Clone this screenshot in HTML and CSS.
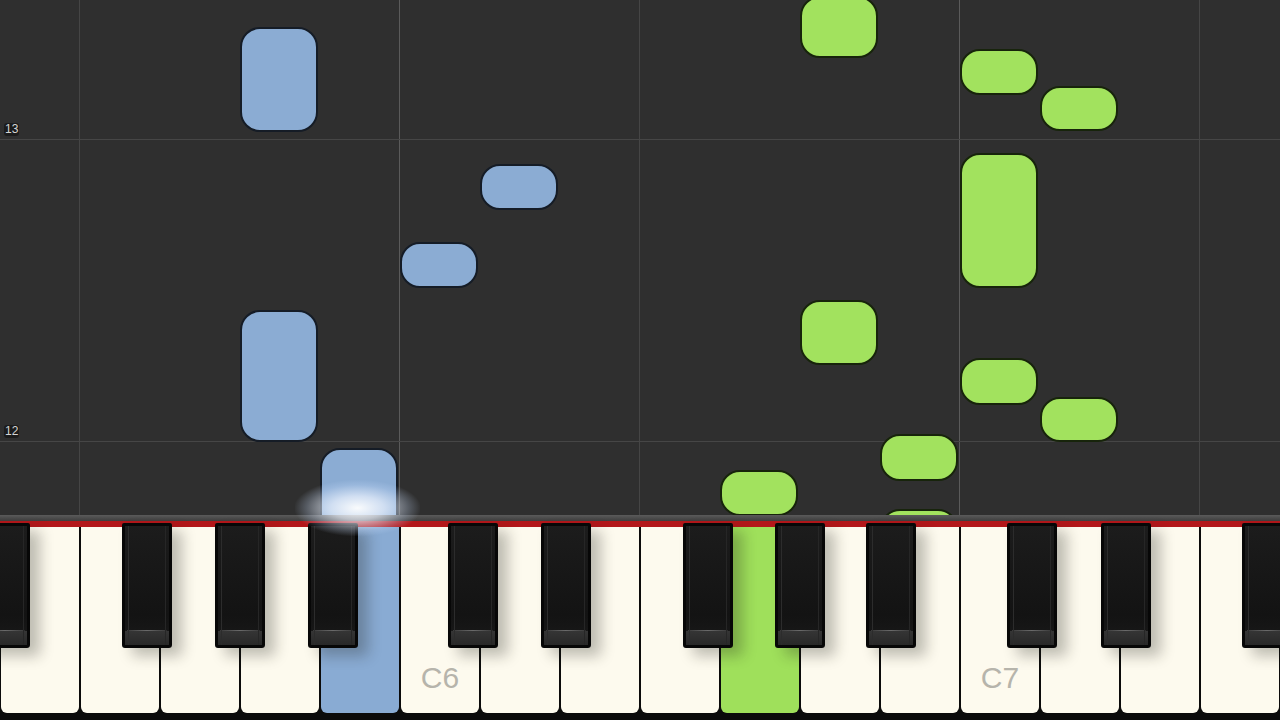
FILE: index.html
```html
<!DOCTYPE html>
<html lang="en">
<head>
    <meta charset="UTF-8">
    <meta name="viewport" content="width=device-width, initial-scale=1.0">
    <title>Piano Roll</title>
    <link rel="stylesheet" href="styles.css">
</head>
<body>
    <div class="stage">
        <div class="roll">
            <!-- grid -->
            <div class="vline" style="left: 79px"></div>
            <div class="vline vline-c" style="left: 399px"></div>
            <div class="vline" style="left: 639px"></div>
            <div class="vline vline-c" style="left: 959px"></div>
            <div class="vline" style="left: 1199px"></div>
            <div class="hline" style="top: 139px"></div>
            <div class="hline" style="top: 441px"></div>
            <span class="measure" style="top: 123px">13</span>
            <span class="measure" style="top: 425px">12</span>

            <!-- left hand -->
            <div class="note blue" style="left: 240px; top: 27px; height: 105px"></div>
            <div class="note blue" style="left: 480px; top: 164px; height: 46px"></div>
            <div class="note blue" style="left: 400px; top: 242px; height: 46px"></div>
            <div class="note blue" style="left: 240px; top: 310px; height: 132px"></div>
            <div class="note blue" style="left: 320px; top: 448px; height: 90px"></div>

            <!-- right hand -->
            <div class="note green" style="left: 800px; top: -4px; height: 62px"></div>
            <div class="note green" style="left: 960px; top: 49px; height: 46px"></div>
            <div class="note green" style="left: 1040px; top: 86px; height: 45px"></div>
            <div class="note green" style="left: 960px; top: 153px; height: 135px"></div>
            <div class="note green" style="left: 800px; top: 300px; height: 65px"></div>
            <div class="note green" style="left: 960px; top: 358px; height: 47px"></div>
            <div class="note green" style="left: 1040px; top: 397px; height: 45px"></div>
            <div class="note green" style="left: 880px; top: 434px; height: 47px"></div>
            <div class="note green" style="left: 720px; top: 470px; height: 46px"></div>
            <div class="note green" style="left: 880px; top: 509px; height: 46px"></div>
        </div>

        <div class="rail"></div>

        <div class="keyboard">
            <div class="whites">
                <div class="white"></div>
                <div class="white"></div>
                <div class="white"></div>
                <div class="white"></div>
                <div class="white pressed-blue"></div>
                <div class="white"><span class="label">C6</span></div>
                <div class="white"></div>
                <div class="white"></div>
                <div class="white"></div>
                <div class="white pressed-green"></div>
                <div class="white"></div>
                <div class="white"></div>
                <div class="white"><span class="label">C7</span></div>
                <div class="white"></div>
                <div class="white"></div>
                <div class="white"></div>
            </div>

            <div class="black" style="left: -20px"></div>
            <div class="black" style="left: 122px"></div>
            <div class="black" style="left: 215px"></div>
            <div class="black" style="left: 308px"></div>
            <div class="black" style="left: 448px"></div>
            <div class="black" style="left: 541px"></div>
            <div class="black" style="left: 683px"></div>
            <div class="black" style="left: 775px"></div>
            <div class="black" style="left: 866px"></div>
            <div class="black" style="left: 1007px"></div>
            <div class="black" style="left: 1101px"></div>
            <div class="black" style="left: 1242px"></div>
        </div>

        <div class="glow"></div>
    </div>
</body>
</html>
```

FILE: styles.css
```css
body {
    margin: 0;
    background: #000;
    font-family: "Liberation Sans", Arial, sans-serif;
}

.stage {
    position: relative;
    width: 1280px;
    height: 720px;
    display: flex;
    flex-direction: column;
    overflow: hidden;
}

/* falling notes area */
.roll {
    position: relative;
    height: 515px;
    background: #2f2f2f;
    overflow: hidden;
}

.vline {
    position: absolute;
    top: 0;
    bottom: 0;
    width: 1px;
    background: #454545;
}

.vline-c {
    background: #5a5a5a;
}

.hline {
    position: absolute;
    left: 0;
    right: 0;
    height: 1px;
    background: #464646;
}

.measure {
    position: absolute;
    left: 4px;
    padding: 0 1px;
    font-size: 12px;
    line-height: 13px;
    color: #d4d4d4;
    background: #1c1c1c;
    border-radius: 3px;
}

.note {
    position: absolute;
    width: 78px;
    box-sizing: border-box;
    border-radius: 20px;
}

.blue {
    background: #8bacd3;
    border: 2px solid #151c26;
}

.green {
    background: #a2e25e;
    border: 2px solid #17240b;
}

/* rail between roll and keys */
.rail {
    height: 6px;
    background: linear-gradient(#5a5a5a, #3e3e3e);
}

.keyboard {
    position: relative;
    flex: 1;
    background: #0b0b0b;
    border-top: 6px solid #b3171a;
}

.whites {
    display: flex;
    height: 186px;
}

.white {
    width: 78px;
    margin: 0 1px;
    background: #fdfaee;
    border-radius: 0 0 6px 6px;
    display: flex;
    align-items: flex-end;
    justify-content: center;
}

.pressed-blue {
    background: #89abd3;
}

.pressed-green {
    background: #9fe05b;
}

.label {
    font-size: 30px;
    color: #b6b4ab;
    padding-bottom: 18px;
}

.black {
    position: absolute;
    top: -4px;
    width: 50px;
    height: 125px;
    box-sizing: border-box;
    border: 3px solid #070707;
    border-radius: 2px 2px 3px 3px;
    background:
        linear-gradient(#2c2c2c, #2c2c2c) left 3px top 0 / 1px 100% no-repeat,
        linear-gradient(#262626, #262626) right 3px top 0 / 1px 100% no-repeat,
        linear-gradient(90deg, #3a3a3a, #6a6a6a 50%, #3a3a3a) center bottom 14px / 90% 1px no-repeat,
        linear-gradient(#353535, #282828) center bottom / 100% 14px no-repeat,
        linear-gradient(#1c1c1c, #131313 75%, #1a1a1a);
    box-shadow: 10px 8px 14px rgba(30, 30, 20, 0.28);
}

.glow {
    position: absolute;
    left: 295px;
    top: 480px;
    width: 125px;
    height: 56px;
    background: radial-gradient(ellipse at center, rgba(255, 255, 255, 0.95) 0, rgba(238, 244, 255, 0.7) 30%, rgba(200, 220, 250, 0.25) 58%, rgba(200, 220, 250, 0) 72%);
    pointer-events: none;
}
```
